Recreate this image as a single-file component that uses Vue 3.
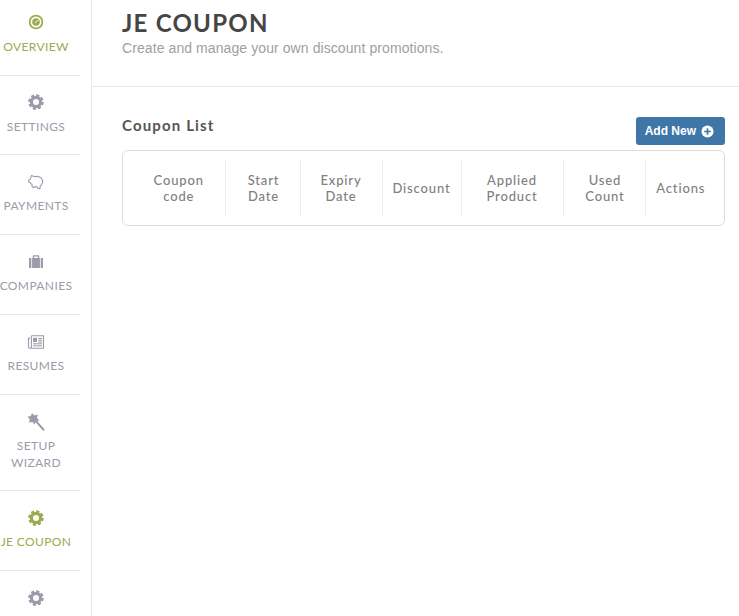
<script setup>
const navItems = [
  { id: 1, label: "OVERVIEW", icon: "overview", active: true },
  { id: 2, label: "SETTINGS", icon: "gear" },
  { id: 3, label: "PAYMENTS", icon: "piggy" },
  { id: 4, label: "COMPANIES", icon: "case" },
  { id: 5, label: "RESUMES", icon: "news" },
  { id: 6, label: "SETUP WIZARD", icon: "wand", tall: true },
  { id: 7, label: "JE COUPON", icon: "gear", active: true },
  { id: 8, label: "", icon: "gear" },
];

const columns = [
  { label: "Coupon code", width: 102 },
  { label: "Start Date", width: 75 },
  { label: "Expiry Date", width: 82 },
  { label: "Discount", width: 79 },
  { label: "Applied Product", width: 102 },
  { label: "Used Count", width: 82 },
  { label: "Actions", width: 79 },
];
</script>

<template>
  <div class="page">
    <aside class="sidebar">
      <a
        v-for="item in navItems"
        :key="item.id"
        class="nav-item"
        :class="{ active: item.active, tall: item.tall }"
      >
        <svg class="nav-icon" viewBox="0 0 18 18" width="18" height="18">
          <g v-if="item.icon === 'overview'">
            <circle cx="9" cy="9" r="6.4" fill="none" stroke="currentColor" stroke-width="1.8" />
            <circle cx="9" cy="9" r="3.8" fill="currentColor" />
            <path d="M7.8 9.8 L11.6 7.2" stroke="#fff" stroke-width="0.9" fill="none" />
          </g>
          <g v-else-if="item.icon === 'gear'">
            <circle cx="9" cy="9" r="4.6" fill="none" stroke="currentColor" stroke-width="3.2" />
            <circle
              cx="9"
              cy="9"
              r="6.6"
              fill="none"
              stroke="currentColor"
              stroke-width="2.4"
              stroke-dasharray="3.1 2.08"
            />
          </g>
          <g v-else-if="item.icon === 'piggy'">
            <path
              d="M3.2 6.4 L4.6 2.4 L7.6 3.8 C10.4 2.8 14 3.8 15.2 6.8 C16.2 9.4 15 11.8 13.2 13 L13 15.6 L10.8 15.4 L10.2 14 L7.8 13.6 L6.8 14.6 L5 13.6 L5 11.4 C4.2 11 3.6 10.4 3.2 9.6 L1.6 9 L1.8 7 Z"
              fill="none"
              stroke="currentColor"
              stroke-width="1.1"
              stroke-linejoin="round"
            />
          </g>
          <g v-else-if="item.icon === 'case'">
            <path
              d="M2 5 H5.8 V3 Q5.8 2.2 6.6 2.2 H11.4 Q12.2 2.2 12.2 3 V5 H16 V15 H2 Z M7.2 5 H10.8 V3.6 H7.2 Z"
              fill="currentColor"
              fill-rule="evenodd"
            />
            <path d="M4.6 5 V15 M13.4 5 V15" stroke="#fff" stroke-width="0.8" />
          </g>
          <g v-else-if="item.icon === 'news'">
            <path
              d="M4.4 2.8 H16.5 V15.2 H3 Q1.5 15.2 1.5 13.7 V5.4 H3 M4.4 2.8 V13.7 Q4.4 15.2 3 15.2"
              fill="none"
              stroke="currentColor"
              stroke-width="1.1"
            />
            <path d="M6 4.8 H10 V9 H6 Z" fill="currentColor" />
            <path
              d="M11.2 5.4 H15 M11.2 7.2 H15 M11.2 9 H15 M6 10.8 H15 M6 12.8 H15"
              stroke="currentColor"
              stroke-width="1"
            />
          </g>
          <g v-else>
            <path d="M8.6 7.6 L16.4 16.6" stroke="currentColor" stroke-width="2.2" stroke-linecap="round" />
            <path
              d="M5 0 L7.2 2.6 L10.8 1.6 L10 5 L12.4 7.4 L9 8.2 L7.8 11.4 L5.4 9 L2 9.6 L2.8 6.2 L0.4 3.8 L3.8 3 Z"
              fill="currentColor"
            />
          </g>
        </svg>
        <span v-if="item.label" class="nav-label">{{ item.label }}</span>
      </a>
    </aside>

    <main class="content">
      <header class="page-header">
        <h1>JE COUPON</h1>
        <p>Create and manage your own discount promotions.</p>
      </header>

      <section class="coupons">
        <div class="list-head">
          <h2>Coupon List</h2>
          <button class="add-btn">
            Add New
            <svg viewBox="0 0 14 14" width="13" height="13">
              <circle cx="7" cy="7" r="6.5" fill="#fff" />
              <path d="M7 3.4 V10.6 M3.4 7 H10.6" stroke="#3f76a8" stroke-width="1.8" />
            </svg>
          </button>
        </div>

        <div class="table-box">
          <table>
            <colgroup>
              <col v-for="col in columns" :key="col.label" :style="{ width: col.width + 'px' }" />
            </colgroup>
            <thead>
              <tr>
                <th v-for="col in columns" :key="col.label">
                  <span>{{ col.label }}</span>
                </th>
              </tr>
            </thead>
          </table>
        </div>
      </section>
    </main>
  </div>
</template>

<style>
html,
body {
  margin: 0;
  background: #fff;
  overflow: hidden;
}
</style>

<style scoped>
.page {
  display: flex;
  height: 616px;
  overflow: hidden;
  background: #fff;
}

.sidebar {
  flex: none;
  box-sizing: border-box;
  width: 92px;
  height: 616px;
  border-right: 1px solid #e8e8ec;
  overflow: hidden;
}

.nav-item {
  display: flex;
  flex-direction: column;
  align-items: center;
  box-sizing: border-box;
  width: 88px;
  height: 80px;
  margin-left: -8px;
  padding-top: 18px;
  border-bottom: 1px solid #e8e8e8;
  color: #9b9bab;
  font-family: Lato, sans-serif;
}

.nav-item:first-child {
  height: 76px;
  padding-top: 13px;
}

.nav-item:nth-child(2) {
  height: 79px;
  padding-top: 17px;
}

.nav-item.tall {
  height: 96px;
}

.nav-item:last-child {
  border-bottom: none;
}

.nav-item.active {
  color: #9aab50;
}

.nav-icon {
  display: block;
  flex: none;
}

.nav-label {
  margin-top: 6px;
  width: 72px;
  font-size: 12px;
  line-height: 17px;
  letter-spacing: 0.38px;
  text-align: center;
}

.nav-item:first-child .nav-label,
.nav-item:nth-child(2) .nav-label {
  margin-top: 7px;
}

.nav-item:not(.tall) .nav-label {
  width: auto;
  white-space: nowrap;
}

.content {
  flex: 1;
  min-width: 0;
}

.page-header {
  box-sizing: border-box;
  height: 87px;
  padding: 10px 30px 0;
  border-bottom: 1px solid #e8e8e8;
}

h1 {
  margin: 0;
  color: #454545;
  font-family: Lato, sans-serif;
  font-size: 24px;
  line-height: 26px;
  font-weight: 700;
  letter-spacing: 1.25px;
}

.page-header p {
  margin: 2px 0 0;
  color: #a0a0a0;
  font-family: "Liberation Sans", Arial, sans-serif;
  font-size: 14px;
  line-height: 20px;
  letter-spacing: 0.085px;
}

.coupons {
  padding: 30px 14px 0 30px;
}

.list-head {
  display: flex;
  justify-content: space-between;
  align-items: flex-start;
  height: 33px;
}

h2 {
  margin: -1px 0 0;
  color: #555;
  font-family: Lato, sans-serif;
  font-size: 15px;
  line-height: 18px;
  font-weight: 700;
  letter-spacing: 1.15px;
}

.add-btn {
  display: flex;
  align-items: center;
  gap: 5px;
  box-sizing: border-box;
  height: 28px;
  padding: 0 11px 0 9px;
  border: none;
  border-radius: 3px;
  background: #3f76a8;
  color: #fff;
  font-family: "Liberation Sans", Arial, sans-serif;
  font-size: 12px;
  font-weight: 700;
  cursor: pointer;
}

.table-box {
  box-sizing: border-box;
  width: 603px;
  height: 76px;
  padding: 9px 0;
  border: 1px solid #dcdcdc;
  border-radius: 6px;
}

table {
  width: 601px;
  height: 56px;
  border-collapse: collapse;
  table-layout: fixed;
}

th {
  padding: 0 12px;
  border-right: 1px solid #efefef;
  color: #808080;
  font-family: Lato, sans-serif;
  font-size: 13px;
  line-height: 16px;
  font-weight: 500;
  letter-spacing: 0.85px;
  text-align: center;
  vertical-align: middle;
}

th:first-child {
  padding-left: 26px;
  padding-right: 16px;
}

th:nth-child(2),
th:nth-child(6) {
  padding-left: 14px;
}

th:nth-child(4) {
  padding: 0;
}

th:last-child {
  border-right: none;
  padding: 0 8px 0 0;
}

th span {
  display: block;
}
</style>
